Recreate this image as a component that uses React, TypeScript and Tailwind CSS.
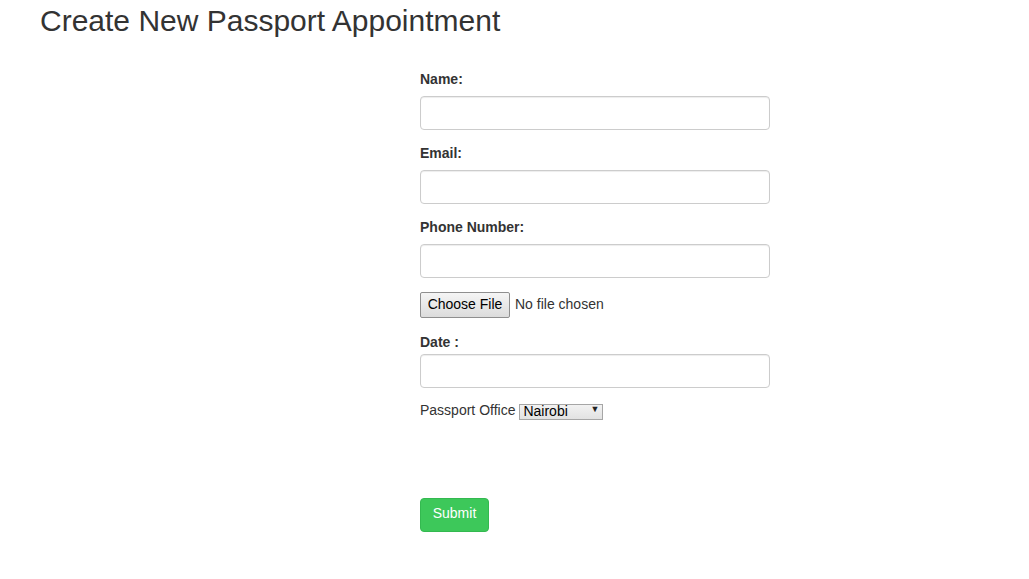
import React from "react";

const font = { fontFamily: '"Liberation Sans", Arial, Helvetica, sans-serif' };

function Field({ label, className = "" }: { label: string; className?: string }) {
  return (
    <div className={className}>
      <label className="block font-bold text-[14px] leading-[20px] text-[#333] mb-[7px]">{label}</label>
      <input
        type="text"
        className="block w-full h-[34px] rounded-[4px] border border-[#ccc] bg-white px-3 text-[14px] shadow-[inset_0_1px_1px_rgba(0,0,0,0.075)] outline-none"
      />
    </div>
  );
}

export default function App() {
  return (
    <div className="min-h-[579px] bg-white text-[#333]" style={font}>
      <h1 className="pl-[40px] pt-[3px] text-[30px] leading-[36px] font-normal text-[#333]">
        Create New Passport Appointment
      </h1>
      <form className="ml-[420px] w-[350px] pt-[30px] pb-10" onSubmit={(e) => e.preventDefault()}>
        <Field label="Name:" className="mb-[13px]" />
        <Field label="Email:" className="mb-[13px]" />
        <Field label="Phone Number:" />
        <div className="mt-[14px] flex items-center h-[26px]">
          <button
            type="button"
            className="h-[26px] w-[90px] rounded-[2px] border border-[#8f8f8f] bg-gradient-to-b from-[#f5f5f5] to-[#dcdcdc] pb-[2px] text-[14px] text-black"
          >
            Choose File
          </button>
          <span className="ml-[5px] -translate-y-[1px] text-[14px] text-[#333]">No file chosen</span>
        </div>
        <div className="mt-[14px]">
          <label className="block font-bold text-[14px] leading-[20px] text-[#333] mb-[2px]">Date :</label>
          <input
            type="text"
            className="block w-full h-[34px] rounded-[4px] border border-[#ccc] bg-white px-3 text-[14px] shadow-[inset_0_1px_1px_rgba(0,0,0,0.075)] outline-none"
          />
        </div>
        <div className="mt-[13px] flex items-center h-[16px] text-[14px] text-[#333]">
          <span className="leading-[16px] translate-y-[1px]">Passport Office</span>
          <div className="relative ml-[4px] h-[16px] w-[84px]">
            <select className="appearance-none h-[16px] w-[84px] border border-[#a6a6a6] bg-gradient-to-b from-[#f2f2f2] to-[#e2e2e2] pl-[3px] pt-0 text-[14px] leading-[13px] text-black outline-none">
              <option>Nairobi</option>
              <option>Mombasa</option>
              <option>Kisumu</option>
            </select>
            <span className="pointer-events-none absolute right-[4px] top-[2px] text-[9px] leading-[12px] text-[#222]">▼</span>
          </div>
        </div>
        <button
          type="submit"
          className="mt-[81px] block h-[34px] w-[69px] rounded-[4px] border border-[#34b950] bg-[#3dc85a] pb-[3px] text-[14px] text-white"
        >
          Submit
        </button>
      </form>
    </div>
  );
}
